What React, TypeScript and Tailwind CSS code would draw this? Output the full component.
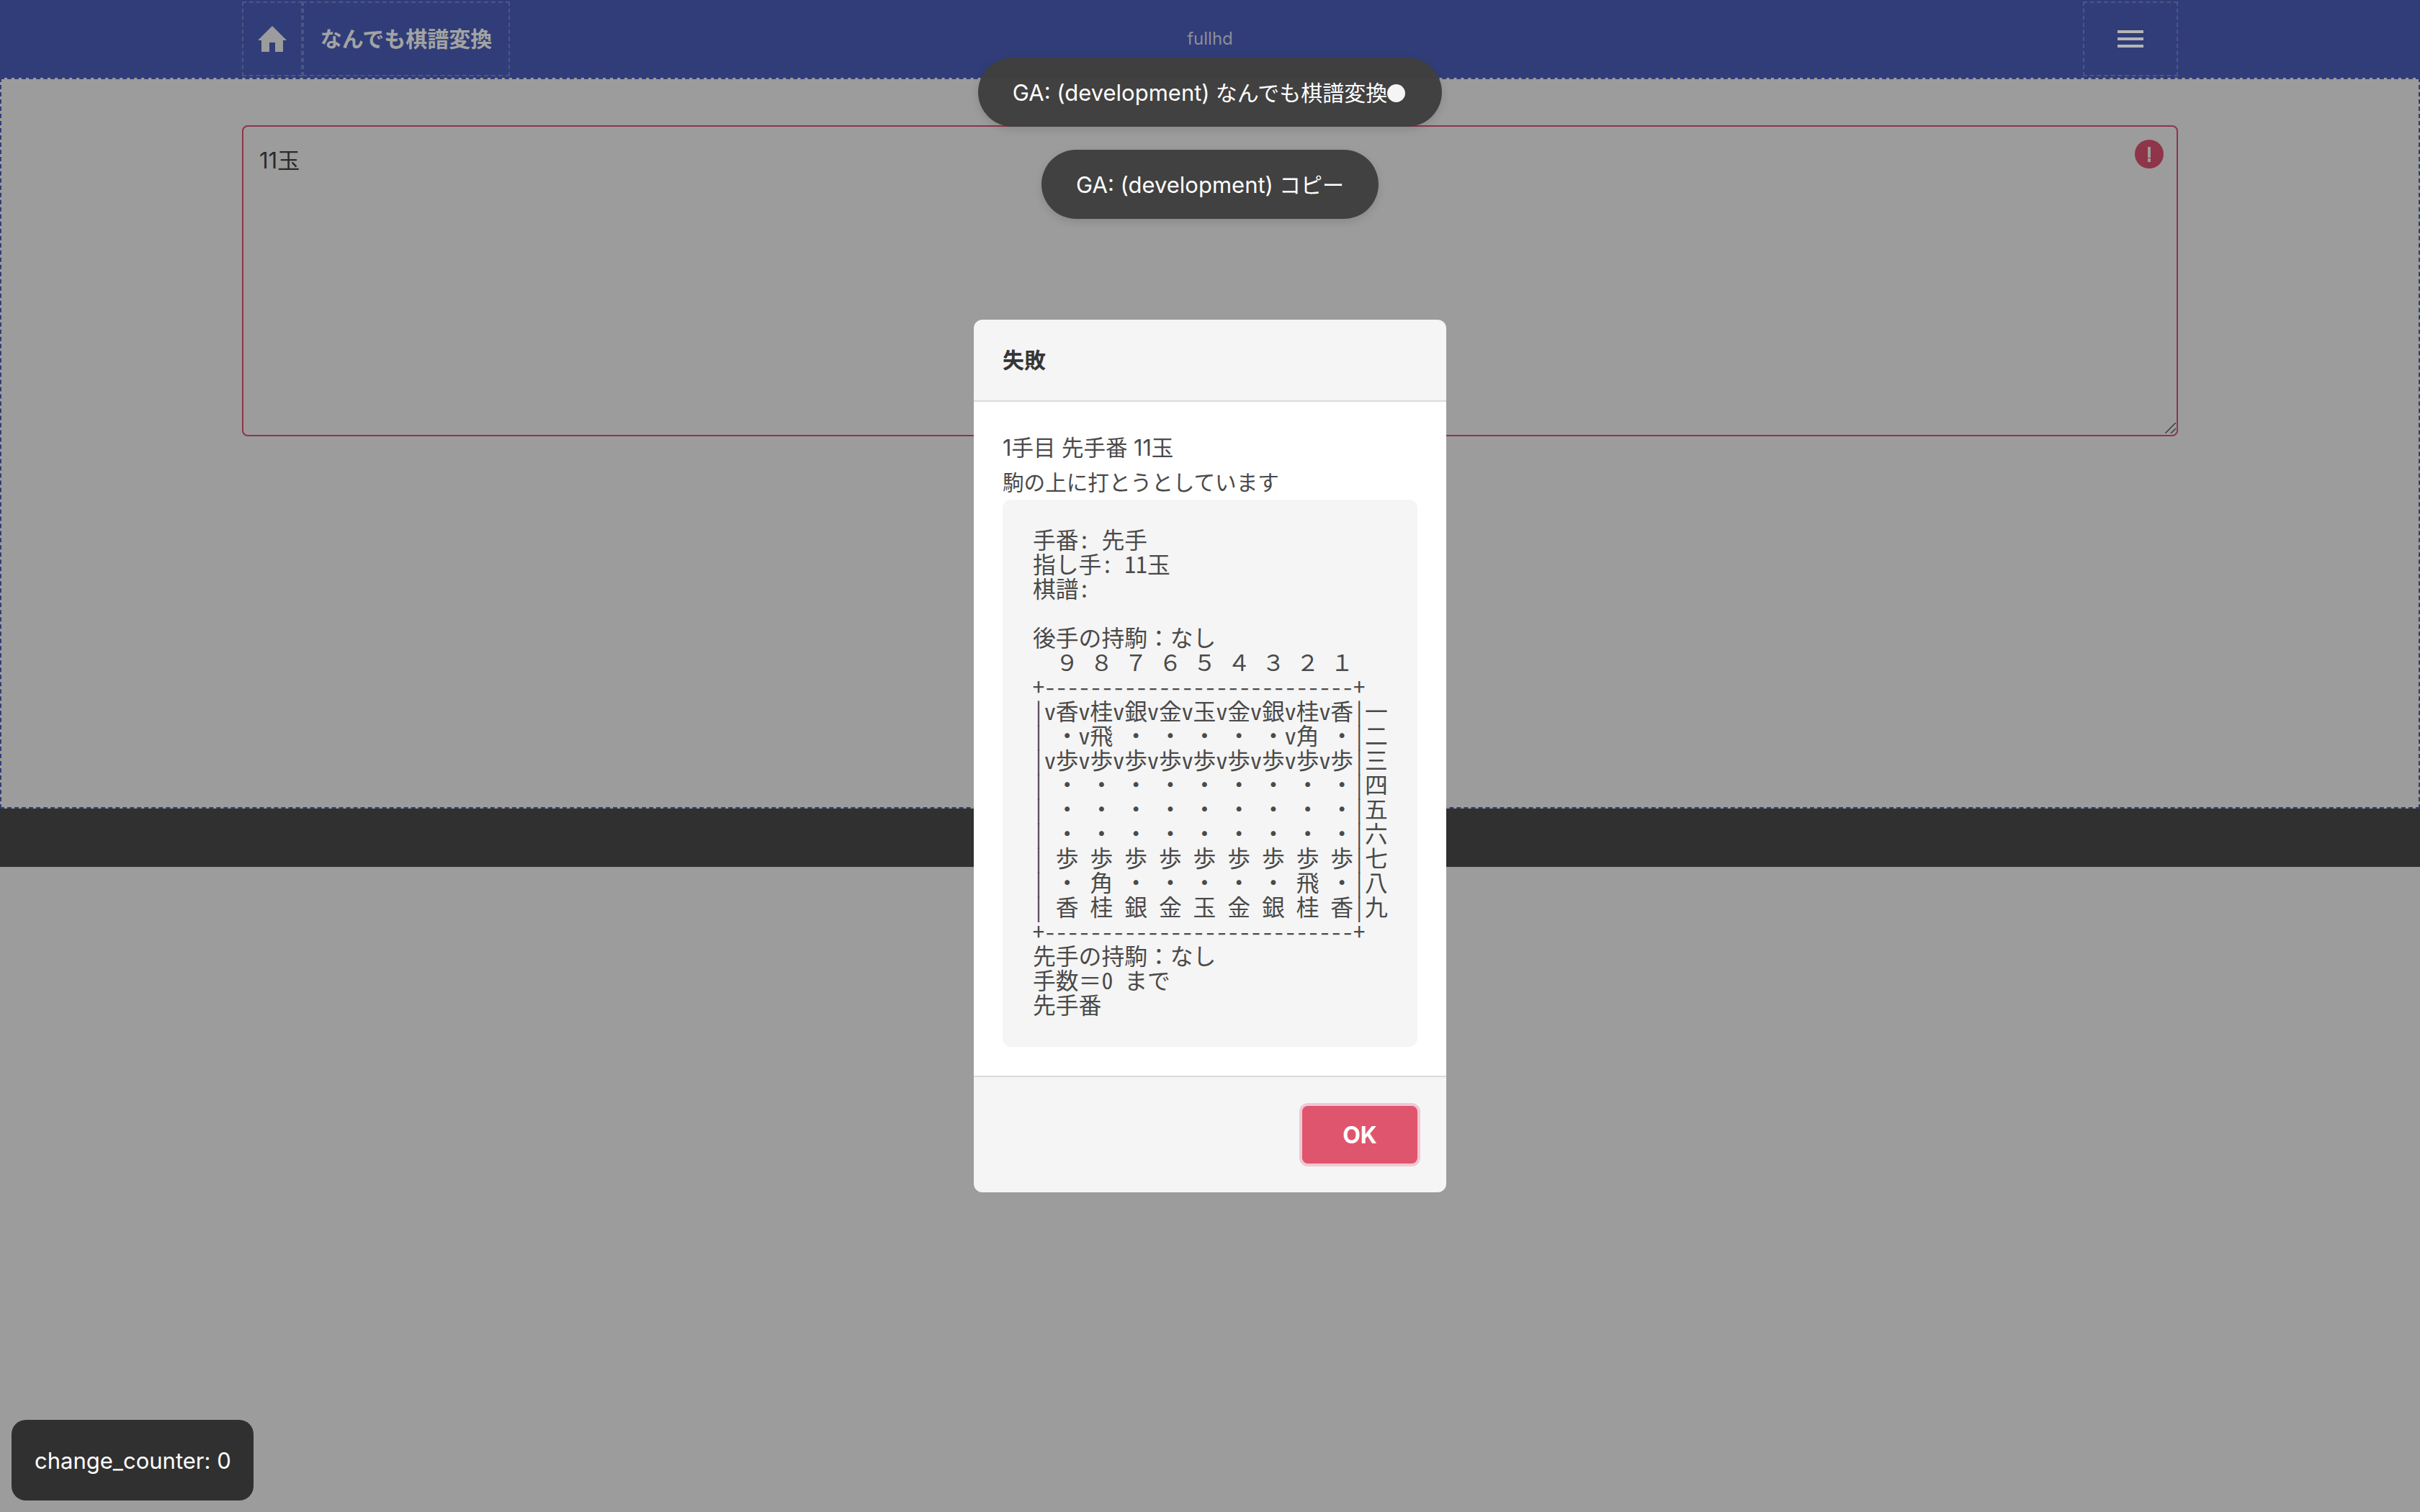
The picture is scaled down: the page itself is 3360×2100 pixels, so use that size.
import React from 'react';

const board = `手番: 先手
指し手: 11玉
棋譜:

後手の持駒：なし
  ９ ８ ７ ６ ５ ４ ３ ２ １
+---------------------------+
|v香v桂v銀v金v玉v金v銀v桂v香|一
| ・v飛 ・ ・ ・ ・ ・v角 ・|二
|v歩v歩v歩v歩v歩v歩v歩v歩v歩|三
| ・ ・ ・ ・ ・ ・ ・ ・ ・|四
| ・ ・ ・ ・ ・ ・ ・ ・ ・|五
| ・ ・ ・ ・ ・ ・ ・ ・ ・|六
| 歩 歩 歩 歩 歩 歩 歩 歩 歩|七
| ・ 角 ・ ・ ・ ・ ・ 飛 ・|八
| 香 桂 銀 金 玉 金 銀 桂 香|九
+---------------------------+
先手の持駒：なし
手数＝0 まで
先手番`;

// full width digits and signs must stay full width, the rest of the pre is half width
const boardParts = board.split(/([０-９：＝]+)/);

const Toast: React.FC<{ children: React.ReactNode }> = ({ children }) => (
  <div className="flex h-24 items-center rounded-[48px] bg-[#3f3f3f]/98 px-12 pt-0.5 text-[31px] leading-[48px] text-white shadow-[0_4px_12px_rgba(0,0,0,0.12)]">
    {children}
  </div>
);

const App: React.FC = () => {
  return (
    <div className="relative h-[2100px] overflow-hidden bg-[#9c9c9c] font-['Inter','Noto_Sans_CJK_JP',sans-serif] text-[#2a2a2a]">
      <header className="h-[108px] bg-[#303d78]">
        <div className="relative mx-auto flex h-full w-[2688px] items-start justify-between pt-0.5">
          <div className="flex h-[104px]">
            <div className="flex w-[84px] items-center justify-center border-2 border-dashed border-[#4b5688]">
              <svg viewBox="0 0 40 36" className="h-[36px] w-[40px] fill-[#9c9c9c]">
                <path d="M20 0 L40 20 L35 20 L35 36 L24 36 L24 23 L16 23 L16 36 L5 36 L5 20 L0 20 Z" />
              </svg>
            </div>
            <div className="flex w-[288px] items-center justify-center border-2 border-dashed border-[#4b5688] text-[30px] font-bold text-[#a3a3a3]">
              なんでも棋譜変換
            </div>
          </div>
          <div className="absolute left-0 right-0 top-[39px] text-center text-[24px] leading-[30px] text-[#8b8d9a]">fullhd</div>
          <div className="flex h-[104px] w-[132px] flex-col items-center justify-center gap-1.5 border-2 border-dashed border-[#4b5688]">
            <span className="h-1 w-9 bg-[#b5b5b5]"></span>
            <span className="h-1 w-9 bg-[#b5b5b5]"></span>
            <span className="h-1 w-9 bg-[#b5b5b5]"></span>
          </div>
        </div>
      </header>

      <main className="h-[1015px] border-2 border-dashed border-[#303d78] pt-16">
        <div className="relative mx-auto w-[2688px]">
          <textarea
            readOnly
            defaultValue="11玉"
            className="block h-[432px] w-full resize-none rounded-lg border-2 border-[#8e3549] bg-transparent p-[22px] pt-[23px] text-[31px] leading-[48px] text-[#2a2a2a] outline-none"
          />
          <div className="absolute right-5 top-5 flex h-10 w-10 flex-col items-center justify-center rounded-full bg-[#8e3549]">
            <span className="h-[15px] w-1 bg-[#9c9c9c]"></span>
            <span className="mt-px h-[5px] w-1 bg-[#9c9c9c]"></span>
          </div>
          {/* resize grip */}
          <svg viewBox="0 0 15 15" className="absolute bottom-1 right-[3px] h-[15px] w-[15px] stroke-[#3c3c3c]" strokeWidth="1.5">
            <path d="M0 15 L15 0 M8 15 L15 8" />
          </svg>
        </div>
      </main>

      <footer className="h-[81px] bg-[#303030]"></footer>

      {/* modal */}
      <div className="absolute inset-0 flex items-center justify-center">
        <div className="w-[656px] overflow-hidden rounded-xl">
          <div className="flex h-[114px] items-center border-b-2 border-[#dbdbdb] bg-[#f5f5f5] px-10 text-[30px] font-bold text-[#363636]">
            失敗
          </div>
          <div className="bg-white p-10 leading-[48px] text-[#4a4a4a]">
            <p className="text-[30.5px]">1手目 先手番 11玉</p>
            <p className="text-[29.6px]">駒の上に打とうとしています</p>
            <pre className="rounded-xl bg-[#f5f5f5] pb-[43px] pl-[42px] pr-10 pt-[37px] font-['Noto_Sans_CJK_JP',monospace] text-[31.8px] leading-[34px] [font-feature-settings:'hwid']">
              {boardParts.map((part, i) =>
                i % 2 === 1 ? (
                  <span key={i} className="[font-feature-settings:normal]">{part}</span>
                ) : (
                  part
                )
              )}
            </pre>
          </div>
          <div className="flex justify-end border-t-2 border-[#dbdbdb] bg-[#f5f5f5] p-10">
            <button className="h-20 w-40 rounded-lg bg-[#e0556e] pt-0.5 text-[32px] font-bold text-white shadow-[0_0_0_4px_#f0c8d3]">
              OK
            </button>
          </div>
        </div>
      </div>

      {/* ga toasts */}
      <div className="absolute left-0 right-0 top-20 flex flex-col items-center gap-8">
        <Toast>
          GA: (development) <span className="ml-2 text-[30px]">なんでも棋譜変換</span>
          <span className="mr-[3px] h-[25px] w-[25px] rounded-full bg-[#f5f5f5]"></span>
        </Toast>
        <Toast>
          GA: (development) <span className="ml-2 text-[30px]">コピー</span>
        </Toast>
      </div>

      <div className="absolute bottom-4 left-4 flex h-28 w-[336px] items-center rounded-[20px] bg-[#303030] pl-8 pt-0.5 text-[31px] text-white">
        change_counter: 0
      </div>
    </div>
  );
};

export default App;
